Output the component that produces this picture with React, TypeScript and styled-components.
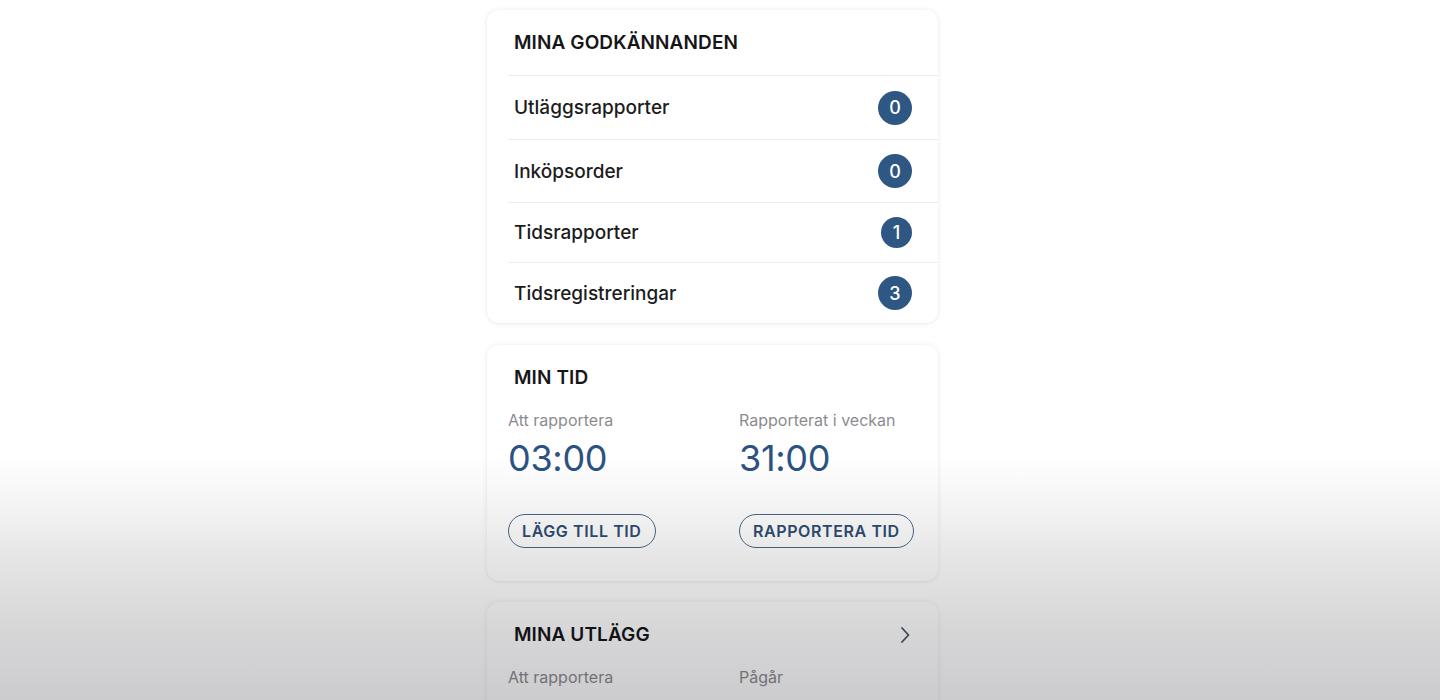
import React from "react";
import styled, { createGlobalStyle } from "styled-components";

const Global = createGlobalStyle`
  html, body { margin: 0; padding: 0; background: #ffffff; }
  body { font-family: Inter, "Noto Sans", "Liberation Sans", sans-serif; -webkit-font-smoothing: antialiased; }
  #root { min-height: 700px; }
`;

const Page = styled.div`
  position: relative;
  height: 700px;
  overflow: hidden;
  display: flex;
  align-items: flex-start;
  justify-content: center;
  padding-right: 15px;
  box-sizing: border-box;
`;

const Shade = styled.div`
  position: absolute;
  inset: 0;
  pointer-events: none;
  background: linear-gradient(
    to bottom,
    rgba(0, 0, 10, 0) 0px,
    rgba(0, 0, 10, 0) 455px,
    rgba(0, 0, 10, 0.04) 500px,
    rgba(0, 0, 10, 0.1) 560px,
    rgba(0, 0, 10, 0.16) 630px,
    rgba(0, 0, 10, 0.2) 700px
  );
`;

const Column = styled.div`
  width: 451px;
  padding-top: 10px;
  display: flex;
  flex-direction: column;
  gap: 22px;
`;

const Card = styled.section<{ $mt?: number }>`
  flex-shrink: 0;
  margin-top: ${(p) => p.$mt ?? 0}px;
  background: #ffffff;
  border-radius: 12px;
  box-shadow: 0 0 6px rgba(0, 0, 0, 0.07), 0 1px 3px rgba(0, 0, 0, 0.04);
  overflow: hidden;
`;

const CardHeader = styled.div<{ $h: number }>`
  height: ${(p) => p.$h}px;
  display: flex;
  align-items: center;
  justify-content: space-between;
  padding: 0 27px 0 27px;
`;

const Title = styled.h2`
  margin: 0;
  font-size: 19px;
  font-weight: 600;
  color: #161618;
  letter-spacing: 0.1px;
`;

const List = styled.div`
  margin-left: 21px;
`;

const Row = styled.div<{ $h: number }>`
  height: ${(p) => p.$h}px;
  border-top: 1.5px solid #ececee;
  display: flex;
  align-items: center;
  justify-content: space-between;
  padding: 0 26px 0 6px;
  box-sizing: border-box;
`;

const RowLabel = styled.span`
  font-size: 19px;
  font-weight: 500;
  color: #1c1c1e;
`;

const Badge = styled.span<{ $narrow?: boolean }>`
  width: ${(p) => (p.$narrow ? 31 : 34)}px;
  height: ${(p) => (p.$narrow ? 31 : 34)}px;
  border-radius: 50%;
  background: #2f5784;
  color: #ffffff;
  font-size: 18px;
  font-weight: 500;
  display: flex;
  align-items: center;
  justify-content: center;
`;

const Stats = styled.div<{ $pb?: number }>`
  display: grid;
  grid-template-columns: 231px 1fr;
  padding: 0 21px ${(p) => p.$pb ?? 0}px;
`;

const Stat = styled.div`
  display: flex;
  flex-direction: column;
`;

const StatLabel = styled.span`
  font-size: 16px;
  color: #8c8c90;
  line-height: 20px;
`;

const StatValue = styled.span`
  font-size: 36px;
  font-weight: 400;
  color: #2c5282;
  line-height: 44px;
  margin-top: 6px;
  letter-spacing: -0.3px;
`;

const Buttons = styled.div`
  display: grid;
  grid-template-columns: 231px 1fr;
  padding: 34px 21px 33px;
`;

const PillButton = styled.button`
  justify-self: start;
  height: 34px;
  padding: 0 13px;
  border-radius: 17px;
  border: 1.5px solid #4d6787;
  background: transparent;
  color: #2e4d72;
  font-family: inherit;
  font-size: 16px;
  font-weight: 600;
  letter-spacing: 0.6px;
  cursor: pointer;
`;

const Chevron = () => (
  <svg width="12" height="20" viewBox="0 0 12 20" fill="none">
    <path d="M3 3 L9.5 10 L3 17" stroke="#4a5566" strokeWidth="1.8" strokeLinecap="round" strokeLinejoin="round" />
  </svg>
);

const approvals = [
  { label: "Utläggsrapporter", count: 0, h: 64 },
  { label: "Inköpsorder", count: 0, h: 63 },
  { label: "Tidsrapporter", count: 1, h: 60, narrow: true },
  { label: "Tidsregistreringar", count: 3, h: 61 },
];

export default function App() {
  return (
    <>
      <Global />
      <Page>
        <Column>
          <Card>
            <CardHeader $h={65}>
              <Title>MINA GODKÄNNANDEN</Title>
            </CardHeader>
            <List>
              {approvals.map((a) => (
                <Row key={a.label} $h={a.h}>
                  <RowLabel>{a.label}</RowLabel>
                  <Badge $narrow={a.narrow}>{a.count}</Badge>
                </Row>
              ))}
            </List>
          </Card>

          <Card>
            <CardHeader $h={65}>
              <Title>MIN TID</Title>
            </CardHeader>
            <Stats>
              <Stat>
                <StatLabel>Att rapportera</StatLabel>
                <StatValue>03:00</StatValue>
              </Stat>
              <Stat>
                <StatLabel>Rapporterat i veckan</StatLabel>
                <StatValue>31:00</StatValue>
              </Stat>
            </Stats>
            <Buttons>
              <PillButton>LÄGG TILL TID</PillButton>
              <PillButton>RAPPORTERA TID</PillButton>
            </Buttons>
          </Card>

          <Card $mt={-1}>
            <CardHeader $h={65}>
              <Title>MINA UTLÄGG</Title>
              <Chevron />
            </CardHeader>
            <Stats $pb={80}>
              <Stat>
                <StatLabel>Att rapportera</StatLabel>
              </Stat>
              <Stat>
                <StatLabel>Pågår</StatLabel>
              </Stat>
            </Stats>
          </Card>
        </Column>
        <Shade />
      </Page>
    </>
  );
}
